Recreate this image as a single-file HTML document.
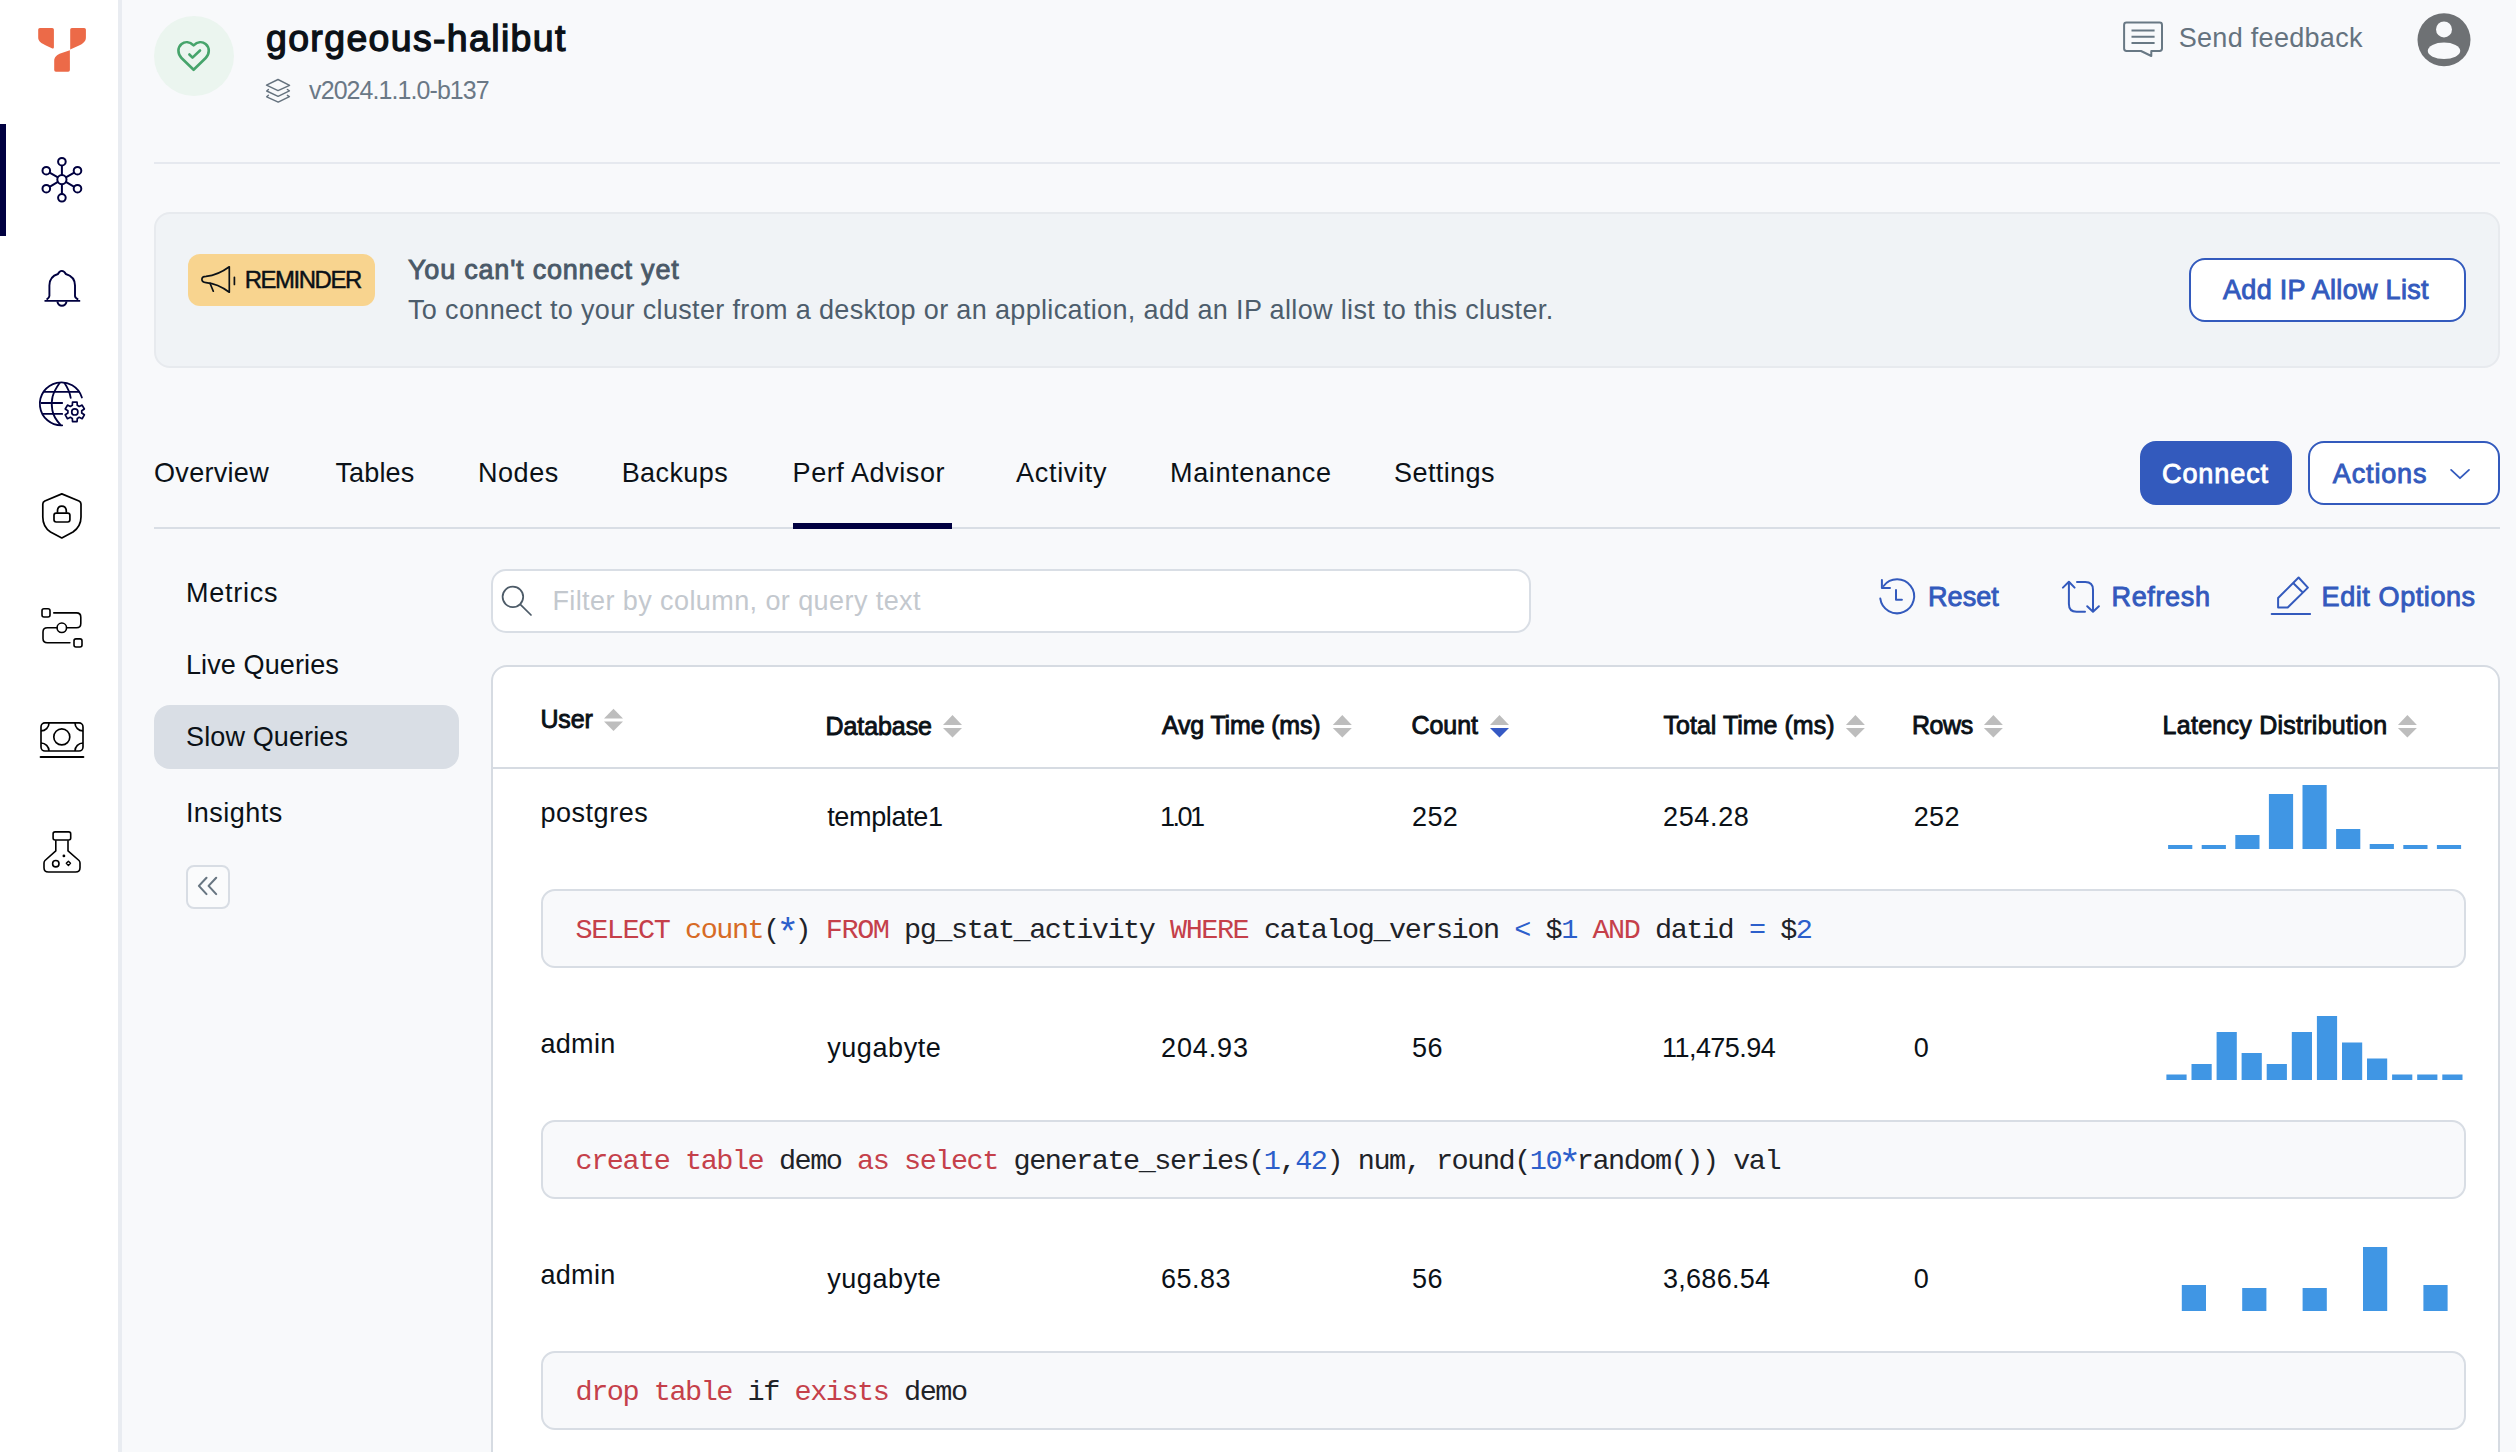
<!DOCTYPE html>
<html><head><meta charset="utf-8">
<style>
*{margin:0;padding:0;box-sizing:border-box}
html,body{width:2516px;height:1452px;overflow:hidden;background:#f8f9fb;font-family:"Liberation Sans",sans-serif}
.box{position:absolute}
.t{position:absolute;white-space:nowrap;line-height:1}
.code{font-family:"Liberation Mono",monospace;font-size:28.5px;letter-spacing:-1.46px}
#ov{position:absolute;left:0;top:0;width:2516px;height:1452px}
</style></head><body>
<div class="box" style="left:0;top:0;width:118px;height:1452px;background:#fff"></div>
<div class="box" style="left:118px;top:0;width:4px;height:1452px;background:#e9ecf1"></div>
<div class="box" style="left:0;top:124px;width:6px;height:112px;background:#000041"></div>
<div class="box" style="left:154px;top:162px;width:2346px;height:2px;background:#e6e9ef"></div>
<div class="box" style="left:154px;top:212px;width:2346px;height:156px;border-radius:16px;background:#f0f3f6;border:2px solid #e7eaee"></div>
<div class="box" style="left:188px;top:254px;width:187px;height:52px;border-radius:12px;background:#f8d48f"></div>
<div class="box" style="left:2189px;top:258px;width:277px;height:64px;border-radius:16px;background:#fff;border:2px solid #335abd"></div>
<div class="box" style="left:154px;top:527px;width:2346px;height:2px;background:#d9dee5"></div>
<div class="box" style="left:793px;top:523px;width:159px;height:6px;background:#000041"></div>
<div class="box" style="left:2140px;top:441px;width:152px;height:64px;border-radius:16px;background:#335abd"></div>
<div class="box" style="left:2308px;top:441px;width:192px;height:64px;border-radius:16px;background:#fff;border:2px solid #335abd"></div>
<div class="box" style="left:154px;top:705px;width:305px;height:64px;border-radius:16px;background:#d9dee5"></div>
<div class="box" style="left:186px;top:865px;width:44px;height:44px;border-radius:8px;background:#fafbfc;border:2px solid #d8dde4"></div>
<div class="box" style="left:491px;top:569px;width:1040px;height:64px;border-radius:15px;background:#fff;border:2px solid #d9dee5"></div>
<div class="box" style="left:491px;top:665px;width:2009px;height:900px;border-radius:16px;background:#fff;border:2px solid #d6dbe2"></div>
<div class="box" style="left:493px;top:767px;width:2005px;height:2px;background:#d6dbe2"></div>
<div class="box" style="left:541px;top:889px;width:1925px;height:79px;border-radius:14px;background:#f8f9fb;border:2px solid #d8dde4"></div>
<div class="t code" style="left:575.5px;top:917px"><span style="color:#c5404a">SELECT</span><span style="color:#1f2328"> </span><span style="color:#d76b25">count</span><span style="color:#1f2328">(</span><span style="color:#2c5fcb;display:inline-block;transform:translateY(5px) scale(1.35)">*</span><span style="color:#1f2328">)</span><span style="color:#1f2328"> </span><span style="color:#c5404a">FROM</span><span style="color:#1f2328"> pg_stat_activity </span><span style="color:#c5404a">WHERE</span><span style="color:#1f2328"> catalog_version </span><span style="color:#2c5fcb">&lt;</span><span style="color:#1f2328"> $</span><span style="color:#2c5fcb">1</span><span style="color:#1f2328"> </span><span style="color:#c5404a">AND</span><span style="color:#1f2328"> datid </span><span style="color:#2c5fcb">=</span><span style="color:#1f2328"> $</span><span style="color:#2c5fcb">2</span></div>
<div class="box" style="left:541px;top:1120px;width:1925px;height:79px;border-radius:14px;background:#f8f9fb;border:2px solid #d8dde4"></div>
<div class="t code" style="left:575.5px;top:1148px"><span style="color:#c5404a">create</span><span style="color:#1f2328"> </span><span style="color:#c5404a">table</span><span style="color:#1f2328"> demo </span><span style="color:#c5404a">as</span><span style="color:#1f2328"> </span><span style="color:#c5404a">select</span><span style="color:#1f2328"> generate_series(</span><span style="color:#2c5fcb">1</span><span style="color:#1f2328">,</span><span style="color:#2c5fcb">42</span><span style="color:#1f2328">) num, round(</span><span style="color:#2c5fcb">10</span><span style="color:#2c5fcb;display:inline-block;transform:translateY(5px) scale(1.35)">*</span><span style="color:#1f2328">random()) val</span></div>
<div class="box" style="left:541px;top:1351px;width:1925px;height:79px;border-radius:14px;background:#f8f9fb;border:2px solid #d8dde4"></div>
<div class="t code" style="left:575.5px;top:1379px"><span style="color:#c5404a">drop</span><span style="color:#1f2328"> </span><span style="color:#c5404a">table</span><span style="color:#1f2328"> if </span><span style="color:#c5404a">exists</span><span style="color:#1f2328"> demo</span></div>
<svg id="ov" width="2516" height="1452" viewBox="0 0 2516 1452">

<!-- logo -->
<g fill="#ec6a48">
<path d="M38.2,29.6 Q38.2,27.9 39.9,27.9 L52.2,27.9 Q53.9,27.9 53.9,29.6 L53.9,47.2 Q53.9,48.9 52.4,48.4 L47,46 C41.5,43.6 38.2,41.5 38.2,37.6 Z"/>
<path d="M70.2,29.6 Q70.2,27.9 71.9,27.9 L84.2,27.9 Q85.9,27.9 85.9,29.6 L85.9,37.6 C85.9,41.6 83,43.8 78.5,45.8 L70.2,49.6 Z"/>
<path d="M69.9,50.3 L69.9,70 Q69.9,71.7 68.2,71.7 L55.9,71.7 Q54.2,71.7 54.2,70 L54.2,60.8 C54.2,56.9 57,54.9 61,53.3 Z"/>
</g>
<!-- cluster icon -->
<g fill="none" stroke="#00003f" stroke-width="2">
<circle cx="61.9" cy="179.6" r="4.6"/>
<circle cx="61.9" cy="161.7" r="3.8"/><circle cx="61.9" cy="197.8" r="3.8"/>
<circle cx="46.3" cy="170.7" r="3.8"/><circle cx="77.5" cy="170.7" r="3.8"/>
<circle cx="46.3" cy="188.7" r="3.8"/><circle cx="77.5" cy="188.7" r="3.8"/>
<path d="M61.9,165.5 V175 M61.9,184.2 V194 M49.6,172.6 L57.9,177.3 M74.2,172.6 L65.9,177.3 M49.6,186.8 L57.9,181.9 M74.2,186.8 L65.9,181.9"/>
</g>
<!-- bell -->
<g fill="none" stroke="#00003f" stroke-width="1.9" stroke-linejoin="round">
<path d="M44.5,300.9 H80.2 M46.6,299.6 Q49.4,297.8 49.4,296 V285.5 C49.4,279.5 53,275.5 58,274 C59,271.7 60.3,270.9 61.8,270.9 C63.3,270.9 64.7,271.7 65.8,274 C70.8,275.5 75,279.5 75,285.5 V296 Q75,297.8 78.2,299.6"/>
<path d="M57.3,301.5 C58,304.3 59.8,305.8 61.9,305.8 C64,305.8 65.9,304.3 66.6,301.5"/>
</g>
<!-- globe -->
<g fill="none" stroke="#00003f" stroke-width="1.8" stroke-linecap="round">
<path d="M62.2,425.3 A21.5,21.5 0 1,1 81.9,397.5"/>
<path d="M44.8,391.9 H79.2 M41.4,403 H62.2 M43.4,413.9 H62.2"/>
<path d="M59.6,383 C52.5,393 50.5,400 52.3,410 C53.2,416 56,420 60.5,424.8"/>
<path d="M64.5,383 C67.5,387.5 69.8,392 70.7,397.8"/>
<path d="M72.29,405.36 L72.55,402.16 L77.05,402.16 L77.31,405.36 L79.21,406.46 L82.11,405.08 L84.36,408.98 L81.71,410.80 L81.71,413.00 L84.36,414.82 L82.11,418.72 L79.21,417.34 L77.31,418.44 L77.05,421.64 L72.55,421.64 L72.29,418.44 L70.39,417.34 L67.49,418.72 L65.24,414.82 L67.89,413.00 L67.89,410.80 L65.24,408.98 L67.49,405.08 L70.39,406.46 Z" stroke-width="1.7" stroke-linejoin="round"/>
<circle cx="74.8" cy="411.9" r="3.1" stroke-width="1.7"/>
</g>
<!-- shield -->
<g fill="none" stroke="#000" stroke-width="1.7" stroke-linejoin="round">
<path d="M61.8,493.9 L44.8,501 Q42.8,502 42.8,504 V517 C42.8,524 46,529 50.5,532 L61.8,537.9 L73,532 C78,528.5 81,524 81,517 V504 Q81,502 79,501 Z"/>
<rect x="54" y="513.1" width="15.9" height="8.9" rx="2.2"/>
<path d="M57.5,512.8 V511 C57.5,508 59.4,506.1 61.8,506.1 C64.2,506.1 66.2,508 66.3,511 V512.8"/>
</g>
<!-- workflow -->
<g fill="none" stroke="#000" stroke-width="1.6" stroke-linecap="round">
<rect x="42" y="608.7" width="8" height="8.3" rx="2"/>
<rect x="74" y="638.9" width="8" height="8.1" rx="2"/>
<circle cx="61.8" cy="627.8" r="4.75"/>
<path d="M53.8,612.9 H76.5 Q80.8,612.9 80.8,617.2 V623.5 Q80.8,627.8 76.5,627.8 H66.6"/>
<path d="M57,627.8 H47.4 Q43,627.8 43,632 V638.6 Q43,642.8 47.4,642.8 H69.9"/>
</g>
<!-- money -->
<g fill="none" stroke="#000" stroke-width="1.65">
<rect x="41" y="722.9" width="42" height="28.1" rx="4"/>
<circle cx="61.8" cy="736.9" r="8"/>
<path d="M49,722.9 A8,8 0 0,1 41,730.9 M75,722.9 A8,8 0 0,0 83,730.9 M49,751 A8,8 0 0,0 41,743 M75,751 A8,8 0 0,1 83,743"/>
<path d="M40.6,757 H83.4" stroke-width="1.9" stroke-linecap="round"/>
</g>
<!-- flask -->
<g fill="none" stroke="#000" stroke-width="1.6" stroke-linejoin="round">
<rect x="53.1" y="831.9" width="17.6" height="8.1" rx="2"/>
<path d="M55.8,840.2 V850.9 L45,860.5 Q44,861.5 44,863 V867.7 Q44,872 48.4,872 H75.6 Q80,872 80,867.7 V863 Q80,861.5 79,860.5 L68,850.9 V840.2"/>
<circle cx="55.8" cy="863.7" r="3.2"/>
<path d="M68.4,861.2 L70.5,863.3 L68.4,865.4 L66.3,863.3 Z" stroke-width="1.4"/>
</g>
<circle cx="63.9" cy="855.9" r="1.4" fill="#000"/>
<!-- heart circle -->
<circle cx="194" cy="56" r="40" fill="#ebf5ef"/>
<g fill="none" stroke="#46a46b" stroke-width="2.6" stroke-linecap="round" stroke-linejoin="round">
<path d="M193.6,69.8 L181.5,58 C177.5,54 177.3,47.5 181.6,44 C185,41.2 189.8,41.7 193.6,45.4 C197.4,41.7 202.2,41.2 205.6,44 C209.9,47.5 209.7,54 205.7,58 Z"/>
<path d="M189.4,54.5 L192.5,57.6 L200,50.5"/>
</g>
<!-- layers -->
<g fill="none" stroke="#65727e" stroke-width="1.45" stroke-linejoin="round" stroke-linecap="round">
<path d="M278,79.5 L289.6,85.3 L278,90.6 L266.5,85.2 Z"/>
<path d="M268.4,89.5 L266.7,91 L278.1,96.3 L289.4,90.9 L287.4,89.5"/>
<path d="M268.4,95.3 L266.7,96.8 L278.2,102.1 L289.4,96.6 L287.4,95.3"/>
</g>
<!-- feedback -->
<g fill="none" stroke="#687884" stroke-width="2" stroke-linejoin="round">
<path d="M2126.5,22.6 H2159.6 Q2162,22.6 2162,25 V48.6 Q2162,51 2159.6,51 H2151.3 V56 L2141,51 H2126.5 Q2124.1,51 2124.1,48.6 V25 Q2124.1,22.6 2126.5,22.6 Z"/>
<path d="M2131.5,30.6 H2154.6 M2131.5,36.8 H2154.6 M2131.5,43 H2154.6"/>
</g>
<!-- avatar -->
<circle cx="2444" cy="39.8" r="26.5" fill="#6e7174"/>
<circle cx="2444" cy="29.4" r="8" fill="#f8f9fb"/>
<ellipse cx="2444" cy="50.8" rx="16.2" ry="8.3" fill="#f8f9fb"/>
<!-- megaphone -->
<g fill="none" stroke="#0b1117" stroke-width="1.7" stroke-linejoin="round" stroke-linecap="round">
<path d="M229.3,266.8 V292.2 C223,287.5 214,283.3 206,282.6 C202.8,282.3 201.9,280.8 201.9,279.3 C201.9,277.8 203,276.5 206,276.4 C214,275.6 223,271.5 229.3,266.8 Z"/>
<path d="M210,283.2 L213.3,291.2 M234.4,277.3 V284.4"/>
</g>
<!-- actions chevron -->
<path d="M2451.1,469.9 L2460,478.2 L2469,469.9" fill="none" stroke="#335abd" stroke-width="1.8" stroke-linecap="round" stroke-linejoin="round"/>
<!-- search -->
<g fill="none" stroke="#4d5b68" stroke-width="1.75" stroke-linecap="round">
<circle cx="512.9" cy="596.8" r="10.3"/>
<path d="M520.5,604.6 L531,615"/>
</g>
<!-- reset icon -->
<g fill="none" stroke="#335abd" stroke-width="2" stroke-linecap="round" stroke-linejoin="round">
<path d="M1880.3,598.6 A17,17 0 1,0 1883.6,586"/>
<path d="M1881.9,580 V587.9 H1890"/>
<path d="M1896,590 V599.8 H1901.9"/>
</g>
<!-- refresh icon -->
<g fill="none" stroke="#335abd" stroke-width="2" stroke-linecap="round" stroke-linejoin="round">
<path d="M2068.9,582.5 V604 Q2068.9,611.8 2076.6,611.8 H2085"/>
<path d="M2062.9,587.6 L2068.9,581.7 L2074.6,587.6"/>
<path d="M2077,582 H2085.3 Q2093,582 2093,589.7 V611"/>
<path d="M2087.2,606.2 L2093,611.8 L2098.9,606.2"/>
</g>
<!-- edit icon -->
<g fill="none" stroke="#335abd" stroke-width="2" stroke-linecap="round" stroke-linejoin="round">
<path d="M2278.1,607.5 V598 L2298.6,577.5 L2307.9,587.6 L2287.7,607.5 Z"/>
<path d="M2293.9,583.8 L2302,591.7"/>
<path d="M2271.7,613.9 H2310.1"/>
</g>
<!-- collapse chevrons -->
<g fill="none" stroke="#687682" stroke-width="2.1" stroke-linecap="round" stroke-linejoin="round">
<path d="M206.5,877.8 L198.9,885.9 L206.5,894.1 M216.2,877.8 L208.6,885.9 L216.2,894.1"/>
</g>

<path d="M604.0,718.6 L613.5,708.7 L623.0,718.6 Z" fill="#bdbdbd"/><path d="M604.0,721.6 L613.5,731.0 L623.0,721.6 Z" fill="#bdbdbd"/>
<path d="M943.0,725.0 L952.5,715.1 L962.0,725.0 Z" fill="#bdbdbd"/><path d="M943.0,728.0 L952.5,737.4 L962.0,728.0 Z" fill="#bdbdbd"/>
<path d="M1332.8,725.0 L1342.3,715.1 L1351.8,725.0 Z" fill="#bdbdbd"/><path d="M1332.8,728.0 L1342.3,737.4 L1351.8,728.0 Z" fill="#bdbdbd"/>
<path d="M1845.9,725.0 L1855.4,715.1 L1864.9,725.0 Z" fill="#bdbdbd"/><path d="M1845.9,728.0 L1855.4,737.4 L1864.9,728.0 Z" fill="#bdbdbd"/>
<path d="M1983.9,725.0 L1993.4,715.1 L2002.9,725.0 Z" fill="#bdbdbd"/><path d="M1983.9,728.0 L1993.4,737.4 L2002.9,728.0 Z" fill="#bdbdbd"/>
<path d="M2397.9,725.0 L2407.4,715.1 L2416.9,725.0 Z" fill="#bdbdbd"/><path d="M2397.9,728.0 L2407.4,737.4 L2416.9,728.0 Z" fill="#bdbdbd"/>
<path d="M1490.0,725.0 L1499.5,715.1 L1509.0,725.0 Z" fill="#bdbdbd"/><path d="M1490.0,728.0 L1499.5,737.4 L1509.0,728.0 Z" fill="#3559c4"/>
<rect x="2168.1" y="845" width="24.2" height="4" fill="#4096e4"/>
<rect x="2201.7" y="845" width="24.2" height="4" fill="#4096e4"/>
<rect x="2235.3" y="835" width="24.2" height="14" fill="#4096e4"/>
<rect x="2268.9" y="794" width="24.2" height="55" fill="#4096e4"/>
<rect x="2302.5" y="785" width="24.2" height="64" fill="#4096e4"/>
<rect x="2336.1" y="829" width="24.2" height="20" fill="#4096e4"/>
<rect x="2369.7" y="844" width="24.2" height="5" fill="#4096e4"/>
<rect x="2403.3" y="845" width="24.2" height="4" fill="#4096e4"/>
<rect x="2436.9" y="845" width="24.2" height="4" fill="#4096e4"/>
<rect x="2166.4" y="1074.5" width="20.2" height="5.5" fill="#4096e4"/>
<rect x="2191.5" y="1064" width="20.2" height="16" fill="#4096e4"/>
<rect x="2216.6" y="1032" width="20.2" height="48" fill="#4096e4"/>
<rect x="2241.6" y="1053" width="20.2" height="27" fill="#4096e4"/>
<rect x="2266.7" y="1064" width="20.2" height="16" fill="#4096e4"/>
<rect x="2291.8" y="1032" width="20.2" height="48" fill="#4096e4"/>
<rect x="2316.9" y="1016" width="20.2" height="64" fill="#4096e4"/>
<rect x="2342.0" y="1042.5" width="20.2" height="37.5" fill="#4096e4"/>
<rect x="2367.0" y="1058.5" width="20.2" height="21.5" fill="#4096e4"/>
<rect x="2392.1" y="1074.5" width="20.2" height="5.5" fill="#4096e4"/>
<rect x="2417.2" y="1074.5" width="20.2" height="5.5" fill="#4096e4"/>
<rect x="2442.3" y="1074.5" width="20.2" height="5.5" fill="#4096e4"/>
<rect x="2181.8" y="1285" width="24.2" height="26" fill="#4096e4"/>
<rect x="2242.2" y="1288" width="24.2" height="23" fill="#4096e4"/>
<rect x="2302.6" y="1288" width="24.2" height="23" fill="#4096e4"/>
<rect x="2363.0" y="1247" width="24.2" height="64" fill="#4096e4"/>
<rect x="2423.4" y="1285" width="24.2" height="26" fill="#4096e4"/>
</svg>
<div class="t" id="title" style="left:266.00px;top:20px;font-size:37.44px;font-weight:400;-webkit-text-stroke:1.3px #0b1117;color:#0b1117;letter-spacing:1.374px">gorgeous-halibut</div>
<div class="t" id="ver" style="left:309.10px;top:78px;font-size:24.96px;font-weight:400;color:#6a7886;letter-spacing:-0.911px">v2024.1.1.0-b137</div>
<div class="t" id="fb" style="left:2178.70px;top:25px;font-size:27.04px;font-weight:400;color:#65737f;letter-spacing:0.289px">Send feedback</div>
<div class="t" id="rem" style="left:244.70px;top:268px;font-size:23.92px;font-weight:400;-webkit-text-stroke:0.45px #0b1117;color:#0b1117;letter-spacing:-1.434px">REMINDER</div>
<div class="t" id="cant" style="left:408.00px;top:257px;font-size:27.04px;font-weight:400;-webkit-text-stroke:0.9px #4a5968;color:#4a5968;letter-spacing:0.779px">You can't connect yet</div>
<div class="t" id="tocon" style="left:408.00px;top:297px;font-size:27.04px;font-weight:400;color:#4d5d6c;letter-spacing:0.333px">To connect to your cluster from a desktop or an application, add an IP allow list to this cluster.</div>
<div class="t" id="addip" style="left:2223.00px;top:277px;font-size:27.04px;font-weight:400;-webkit-text-stroke:0.9px #335abd;color:#335abd;letter-spacing:0.293px">Add IP Allow List</div>
<div class="t" id="conn" style="left:2162.00px;top:461px;font-size:27.04px;font-weight:400;-webkit-text-stroke:0.9px #ffffff;color:#ffffff;letter-spacing:0.905px">Connect</div>
<div class="t" id="act" style="left:2332.80px;top:461px;font-size:27.04px;font-weight:400;-webkit-text-stroke:0.9px #335abd;color:#335abd;letter-spacing:0.845px">Actions</div>
<div class="t" id="t1" style="left:154.00px;top:460px;font-size:27.04px;font-weight:400;color:#0b1117;letter-spacing:0.296px">Overview</div>
<div class="t" id="t2" style="left:335.40px;top:460px;font-size:27.04px;font-weight:400;color:#0b1117;letter-spacing:0.136px">Tables</div>
<div class="t" id="t3" style="left:478.00px;top:460px;font-size:27.04px;font-weight:400;color:#0b1117;letter-spacing:0.520px">Nodes</div>
<div class="t" id="t4" style="left:621.70px;top:460px;font-size:27.04px;font-weight:400;color:#0b1117;letter-spacing:0.390px">Backups</div>
<div class="t" id="t5" style="left:792.60px;top:460px;font-size:27.04px;font-weight:400;color:#0b1117;letter-spacing:0.562px">Perf Advisor</div>
<div class="t" id="t6" style="left:1016.00px;top:460px;font-size:27.04px;font-weight:400;color:#0b1117;letter-spacing:0.701px">Activity</div>
<div class="t" id="t7" style="left:1170.00px;top:460px;font-size:27.04px;font-weight:400;color:#0b1117;letter-spacing:0.625px">Maintenance</div>
<div class="t" id="t8" style="left:1394.00px;top:460px;font-size:27.04px;font-weight:400;color:#0b1117;letter-spacing:0.406px">Settings</div>
<div class="t" id="m1" style="left:185.90px;top:580px;font-size:27.04px;font-weight:400;color:#0b1117;letter-spacing:0.769px">Metrics</div>
<div class="t" id="m2" style="left:185.90px;top:652px;font-size:27.04px;font-weight:400;color:#0b1117;letter-spacing:0.106px">Live Queries</div>
<div class="t" id="m3" style="left:186.00px;top:724px;font-size:27.04px;font-weight:400;color:#0b1117;letter-spacing:0.106px">Slow Queries</div>
<div class="t" id="m4" style="left:185.90px;top:800px;font-size:27.04px;font-weight:400;color:#0b1117;letter-spacing:0.451px">Insights</div>
<div class="t" id="ph" style="left:552.40px;top:588px;font-size:27.04px;font-weight:400;color:#c3c8ce;letter-spacing:0.402px">Filter by column, or query text</div>
<div class="t" id="reset" style="left:1928.00px;top:584px;font-size:27.04px;font-weight:400;-webkit-text-stroke:0.9px #335abd;color:#335abd;letter-spacing:0.049px">Reset</div>
<div class="t" id="refr" style="left:2111.50px;top:584px;font-size:27.04px;font-weight:400;-webkit-text-stroke:0.9px #335abd;color:#335abd;letter-spacing:0.631px">Refresh</div>
<div class="t" id="edit" style="left:2321.60px;top:584px;font-size:27.04px;font-weight:400;-webkit-text-stroke:0.9px #335abd;color:#335abd;letter-spacing:0.570px">Edit Options</div>
<div class="t" id="h1" style="left:540.40px;top:707px;font-size:24.96px;font-weight:400;-webkit-text-stroke:0.9px #0b1117;color:#0b1117;letter-spacing:-0.092px">User</div>
<div class="t" id="h2" style="left:825.50px;top:714px;font-size:24.96px;font-weight:400;-webkit-text-stroke:0.9px #0b1117;color:#0b1117;letter-spacing:-0.049px">Database</div>
<div class="t" id="h3" style="left:1161.90px;top:713px;font-size:24.96px;font-weight:400;-webkit-text-stroke:0.9px #0b1117;color:#0b1117;letter-spacing:-0.134px">Avg Time (ms)</div>
<div class="t" id="h4" style="left:1411.60px;top:713px;font-size:24.96px;font-weight:400;-webkit-text-stroke:0.9px #0b1117;color:#0b1117;letter-spacing:-0.063px">Count</div>
<div class="t" id="h5" style="left:1663.50px;top:713px;font-size:24.96px;font-weight:400;-webkit-text-stroke:0.9px #0b1117;color:#0b1117;letter-spacing:0.031px">Total Time (ms)</div>
<div class="t" id="h6" style="left:1911.90px;top:713px;font-size:24.96px;font-weight:400;-webkit-text-stroke:0.9px #0b1117;color:#0b1117;letter-spacing:-0.373px">Rows</div>
<div class="t" id="h7" style="left:2162.60px;top:713px;font-size:24.96px;font-weight:400;-webkit-text-stroke:0.9px #0b1117;color:#0b1117;letter-spacing:0.281px">Latency Distribution</div>
<div class="t" id="r0c0" style="left:540.40px;top:800px;font-size:27.04px;font-weight:400;color:#0b1117;letter-spacing:0.534px">postgres</div>
<div class="t" id="r0c1" style="left:827.20px;top:804px;font-size:27.04px;font-weight:400;color:#0b1117;letter-spacing:-0.360px">template1</div>
<div class="t" id="r0c2" style="left:1160.00px;top:804px;font-size:27.04px;font-weight:400;color:#0b1117;letter-spacing:-2.526px">1.01</div>
<div class="t" id="r0c3" style="left:1412.00px;top:804px;font-size:27.04px;font-weight:400;color:#0b1117;letter-spacing:0.367px">252</div>
<div class="t" id="r0c4" style="left:1663.00px;top:804px;font-size:27.04px;font-weight:400;color:#0b1117;letter-spacing:0.631px">254.28</div>
<div class="t" id="r0c5" style="left:1913.70px;top:804px;font-size:27.04px;font-weight:400;color:#0b1117;letter-spacing:0.317px">252</div>
<div class="t" id="r1c0" style="left:540.40px;top:1031px;font-size:27.04px;font-weight:400;color:#0b1117;letter-spacing:0.328px">admin</div>
<div class="t" id="r1c1" style="left:827.20px;top:1035px;font-size:27.04px;font-weight:400;color:#0b1117;letter-spacing:0.561px">yugabyte</div>
<div class="t" id="r1c2" style="left:1161.00px;top:1035px;font-size:27.04px;font-weight:400;color:#0b1117;letter-spacing:0.871px">204.93</div>
<div class="t" id="r1c3" style="left:1412.00px;top:1035px;font-size:27.04px;font-weight:400;color:#0b1117;letter-spacing:0.567px">56</div>
<div class="t" id="r1c4" style="left:1662.00px;top:1035px;font-size:27.04px;font-weight:400;color:#0b1117;letter-spacing:-0.564px">11,475.94</div>
<div class="t" id="r1c5" style="left:1913.70px;top:1035px;font-size:27.04px;font-weight:400;color:#0b1117;letter-spacing:0.450px">0</div>
<div class="t" id="r2c0" style="left:540.40px;top:1262px;font-size:27.04px;font-weight:400;color:#0b1117;letter-spacing:0.328px">admin</div>
<div class="t" id="r2c1" style="left:827.20px;top:1266px;font-size:27.04px;font-weight:400;color:#0b1117;letter-spacing:0.561px">yugabyte</div>
<div class="t" id="r2c2" style="left:1161.00px;top:1266px;font-size:27.04px;font-weight:400;color:#0b1117;letter-spacing:0.472px">65.83</div>
<div class="t" id="r2c3" style="left:1412.00px;top:1266px;font-size:27.04px;font-weight:400;color:#0b1117;letter-spacing:0.567px">56</div>
<div class="t" id="r2c4" style="left:1663.00px;top:1266px;font-size:27.04px;font-weight:400;color:#0b1117;letter-spacing:0.259px">3,686.54</div>
<div class="t" id="r2c5" style="left:1913.70px;top:1266px;font-size:27.04px;font-weight:400;color:#0b1117;letter-spacing:0.450px">0</div>
</body></html>
